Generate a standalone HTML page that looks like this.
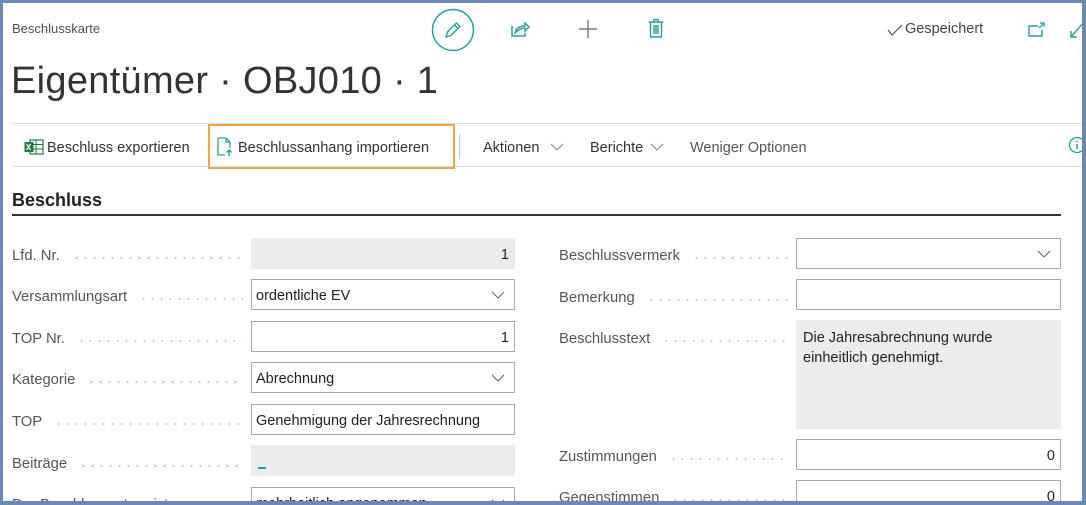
<!DOCTYPE html>
<html><head><meta charset="utf-8">
<style>
*{margin:0;padding:0;box-sizing:border-box}
html,body{width:1086px;height:505px;overflow:hidden;background:#6b88b3}
#f{position:absolute;left:3px;top:3px;width:1079px;height:498px;background:#fff;overflow:hidden;font-family:"Liberation Sans",sans-serif;color:#212121}
.a{position:absolute;white-space:nowrap}
.lbl{position:absolute;font-size:14.8px;color:#555;height:30px;line-height:30px;display:flex;margin-top:2px}
.lbl span.d{flex:1;margin:0 8px 0 12px;height:2px;align-self:center;margin-top:3px;background:radial-gradient(circle,#c4c4c4 0.8px,transparent 1.1px) 0 0/9px 2px repeat-x}
.in{position:absolute;height:31px;border:1px solid #a8a8a8;font-size:14.5px;line-height:29px;padding:2px 5px 0 4px;color:#212121;background:#fff}
.ro{border-color:#ececec;background:#ebecee}
.r{text-align:right}
.ch{position:absolute;right:9px;top:11px}
.tb{position:absolute;top:137px;font-size:14.5px;color:#333}
</style></head><body>
<div id="f">
<div class="a" style="left:9px;top:18px;font-size:13px;color:#505050">Beschlusskarte</div>
<div class="a" style="left:8px;top:57px;font-size:38px;color:#333;letter-spacing:0.3px">Eigentümer · OBJ010 · 1</div>

<svg class="a" style="left:428px;top:5px" width="44" height="44" viewBox="0 0 44 44"><circle cx="22" cy="22" r="20.5" fill="none" stroke="#2a9d9b" stroke-width="1.5"/><path d="M15 29l1.5-5 9-9 3.5 3.5-9 9z M23.5 17l3.5 3.5" fill="none" stroke="#2a9d9b" stroke-width="1.4"/></svg>
<svg class="a" style="left:507px;top:17px" width="20" height="18" viewBox="0 0 20 18"><path d="M2 6v10h13v-3" fill="none" stroke="#2a9d9b" stroke-width="1.5"/><path d="M5 13c1-5 5-7 10-7V3l4 4-4 4V8c-4 0-7 2-10 5z" fill="none" stroke="#2a9d9b" stroke-width="1.4"/></svg>
<svg class="a" style="left:576px;top:17px" width="18" height="18"><path d="M9 0v18M0 9h18" stroke="#777" stroke-width="1.4"/></svg>
<svg class="a" style="left:645px;top:15px" width="16" height="20" viewBox="0 0 16 20"><path d="M1 4h14M6 4V1.5h4V4M2.5 4.5V19h11V4.5M6 7v9M8 7v9M10 7v9" fill="none" stroke="#2a9d9b" stroke-width="1.4"/></svg>
<svg class="a" style="left:884px;top:21px" width="16" height="12"><path d="M1 6l4 5 10-10" fill="none" stroke="#555" stroke-width="1.2"/></svg>
<div class="a" style="left:902px;top:18px;font-size:14.5px;color:#444">Gespeichert</div>
<svg class="a" style="left:1025px;top:19px" width="18" height="15"><path d="M10 4H1v10h13V8" fill="none" stroke="#2a9d9b" stroke-width="1.4"/><path d="M12 1h4v4M16 1l-5 5" fill="none" stroke="#2a9d9b" stroke-width="1.2"/></svg>
<svg class="a" style="left:1066px;top:18px" width="14" height="18"><path d="M2 16L14 2M2 10v6h6" fill="none" stroke="#2a9d9b" stroke-width="1.4"/></svg>

<div class="a" style="left:9px;top:120px;width:1070px;height:1px;background:#dedede"></div>
<div class="a" style="left:9px;top:163px;width:1070px;height:1px;background:#dedede"></div>
<svg class="a" style="left:21px;top:136px" width="20" height="16" viewBox="0 0 20 16"><rect x="6" y="1" width="13" height="14" fill="#fff" stroke="#1f7a45" stroke-width="1.2"/><path d="M6 5.5h13M6 10h13M12 1v14" stroke="#1f7a45" stroke-width="1"/><rect x="0.5" y="3" width="9" height="10" fill="#1f7a45"/><path d="M2.5 5l4 6M6.5 5l-4 6" stroke="#fff" stroke-width="1.2"/></svg>
<div class="tb" style="left:44px">Beschluss exportieren</div>
<div class="a" style="left:205px;top:121px;width:247px;height:45px;border:2.5px solid #f0a54a"></div>
<svg class="a" style="left:214px;top:134px" width="16" height="20" viewBox="0 0 16 20"><path d="M1 1h8l4 4v6M9 1v4h4M1 1v17h7" fill="none" stroke="#2a9d9b" stroke-width="1.3"/><path d="M12 19v-6M9.5 15.5L12 13l2.5 2.5" fill="none" stroke="#2a9d9b" stroke-width="1.4"/></svg>
<div class="tb" style="left:235px">Beschlussanhang importieren</div>
<div class="a" style="left:456px;top:131px;width:1px;height:25px;background:#c8c8c8"></div>
<div class="tb" style="left:480px">Aktionen</div>
<svg class="a" style="left:547px;top:140px" width="14" height="9"><path d="M1 1l6 6 6-6" fill="none" stroke="#888" stroke-width="1.1"/></svg>
<div class="tb" style="left:587px">Berichte</div>
<svg class="a" style="left:647px;top:140px" width="14" height="9"><path d="M1 1l6 6 6-6" fill="none" stroke="#888" stroke-width="1.1"/></svg>
<div class="tb" style="left:687px;color:#555">Weniger Optionen</div>
<svg class="a" style="left:1065px;top:133px" width="18" height="18"><circle cx="9" cy="9" r="7.5" fill="none" stroke="#2a9d9b" stroke-width="1.3"/><path d="M9 8v5M9 5v1.5" stroke="#2a9d9b" stroke-width="1.5"/></svg>

<div class="a" style="left:9px;top:187px;font-size:18px;font-weight:bold;color:#222">Beschluss</div>
<div class="a" style="left:9px;top:211px;width:1049px;height:2px;background:#333"></div>

<div class="lbl" style="left:9px;top:236px;width:239px">Lfd. Nr.<span class="d"></span></div>
<div class="in ro r" style="left:248px;top:235px;width:264px">1</div>
<div class="lbl" style="left:9px;top:277px;width:239px">Versammlungsart<span class="d"></span></div>
<div class="in" style="left:248px;top:276px;width:264px">ordentliche EV<svg class="ch" width="14" height="9"><path d="M1 1l6 6 6-6" fill="none" stroke="#666" stroke-width="1.1"/></svg></div>
<div class="lbl" style="left:9px;top:319px;width:239px">TOP Nr.<span class="d"></span></div>
<div class="in r" style="left:248px;top:318px;width:264px">1</div>
<div class="lbl" style="left:9px;top:360px;width:239px">Kategorie<span class="d"></span></div>
<div class="in" style="left:248px;top:359px;width:264px">Abrechnung<svg class="ch" width="14" height="9"><path d="M1 1l6 6 6-6" fill="none" stroke="#666" stroke-width="1.1"/></svg></div>
<div class="lbl" style="left:9px;top:402px;width:239px">TOP<span class="d"></span></div>
<div class="in" style="left:248px;top:401px;width:264px">Genehmigung der Jahresrechnung</div>
<div class="lbl" style="left:9px;top:444px;width:239px">Beiträge<span class="d"></span></div>
<div class="in ro" style="left:248px;top:442px;width:264px"><div class="a" style="left:6px;top:21px;width:8px;height:1.5px;background:#2a9d9b"></div></div>
<div class="lbl" style="left:9px;top:485px;width:239px">Der Beschlussantrag ist<span class="d"></span></div>
<div class="in" style="left:248px;top:484px;width:264px">mehrheitlich angenommen<svg class="ch" width="14" height="9"><path d="M1 1l6 6 6-6" fill="none" stroke="#666" stroke-width="1.1"/></svg></div>

<div class="lbl" style="left:556px;top:236px;width:237px">Beschlussvermerk<span class="d"></span></div>
<div class="in" style="left:793px;top:235px;width:265px"><svg class="ch" width="14" height="9"><path d="M1 1l6 6 6-6" fill="none" stroke="#666" stroke-width="1.1"/></svg></div>
<div class="lbl" style="left:556px;top:278px;width:237px">Bemerkung<span class="d"></span></div>
<div class="in" style="left:793px;top:276px;width:265px"></div>
<div class="lbl" style="left:556px;top:319px;width:237px">Beschlusstext<span class="d"></span></div>
<div class="in ro" style="left:793px;top:317px;width:265px;height:109px;white-space:normal;line-height:20px;padding:7px 6px">Die Jahresabrechnung wurde einheitlich genehmigt.</div>
<div class="lbl" style="left:556px;top:437px;width:237px">Zustimmungen<span class="d"></span></div>
<div class="in r" style="left:793px;top:436px;width:265px">0</div>
<div class="lbl" style="left:556px;top:478px;width:237px">Gegenstimmen<span class="d"></span></div>
<div class="in r" style="left:793px;top:477px;width:265px">0</div>
</div>
</body></html>
